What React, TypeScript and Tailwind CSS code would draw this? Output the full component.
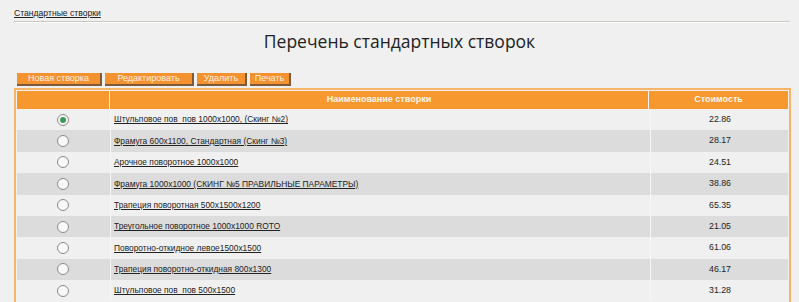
import React from "react";

const rows: [string, string][] = [
  ["Штульповое пов  пов 1000x1000, (Скинг №2)", "22.86"],
  ["Фрамуга 600x1100, Стандартная (Скинг №3)", "28.17"],
  ["Арочное поворотное 1000x1000", "24.51"],
  ["Фрамуга 1000x1000 (СКИНГ №5 ПРАВИЛЬНЫЕ ПАРАМЕТРЫ)", "38.86"],
  ["Трапеция поворотная 500x1500x1200", "65.35"],
  ["Треугольное поворотное 1000x1000 ROTO", "21.05"],
  ["Поворотно-откидное левое1500x1500", "61.06"],
  ["Трапеция поворотно-откидная 800x1300", "46.17"],
  ["Штульповое пов  пов 500x1500", "31.28"],
];

function Radio({ checked }: { checked: boolean }) {
  return (
    <span className="inline-flex h-[12px] w-[12px] items-center justify-center rounded-full border border-[#8a8a8a] bg-[#f8f8f8]">
      {checked && <span className="h-[6px] w-[6px] rounded-full bg-[#3f9a5a]" />}
    </span>
  );
}

function Btn({ label, w }: { label: string; w: string }) {
  return (
    <div
      className={`${w} flex h-[13px] items-center justify-center border-r-2 border-b-2 border-[#7d5a3c] bg-[#f4922f] text-[9px] leading-none text-[#fff0e0]`}
    >
      {label}
    </div>
  );
}

export default function App() {
  return (
    <div
      className="h-[302px] w-[799px] overflow-hidden bg-[#f0f0f0] text-[#222]"
      style={{ fontFamily: "'Liberation Sans', Arial, sans-serif" }}
    >
      <div className="px-[14px] pt-[7px]">
        <div className="h-[12px] text-[8.6px] leading-[12px] underline text-[#222]">Стандартные створки</div>
        <div className="mt-[2px] mr-[-5px] h-[2px] border-t border-[#c8c8c0] border-b border-b-white" />
        <div
          className="mt-[5px] text-center text-[17.5px] leading-[26px] text-[#222]"
          style={{ fontFamily: "'Open Sans', sans-serif" }}
        >
          Перечень стандартных створок
        </div>
        <div className="mt-[19px] flex gap-[3px] pl-[3px]">
          <Btn label="Новая створка" w="w-[85px]" />
          <Btn label="Редактировать" w="w-[89px]" />
          <Btn label="Удалить" w="w-[50px]" />
          <Btn label="Печать" w="w-[41px]" />
        </div>
        <div className="mt-[2px] w-[777px] border-2 border-[#f6b468] bg-[#f0f0f0] p-px">
          <div className="flex h-[18px] gap-px text-[9px] font-bold text-[#fff4e8]">
            <div className="w-[92px] bg-[#f7982f]" />
            <div className="flex w-[538px] items-center justify-center bg-[#f7982f]">Наименование створки</div>
            <div className="flex flex-1 items-center justify-center bg-[#f7982f]">Стоимость</div>
          </div>
          {rows.map(([name, price], i) => (
            <div
              key={i}
              className={`flex h-[21.375px] gap-px text-[8.4px] ${i % 2 === 1 ? "bg-[#dcdcdc]" : "bg-[#f0f0f0]"}`}
            >
              <div className="flex w-[92px] items-center justify-center">
                <Radio checked={i === 0} />
              </div>
              <div className="w-px bg-[#f6f6f6]" />
              <div className="flex w-[537px] items-center whitespace-pre pl-[2px] underline">{name}</div>
              <div className="w-px bg-[#f6f6f6]" />
              <div className="flex flex-1 items-center justify-center text-[8.8px]">{price}</div>
            </div>
          ))}
        </div>
      </div>
    </div>
  );
}
